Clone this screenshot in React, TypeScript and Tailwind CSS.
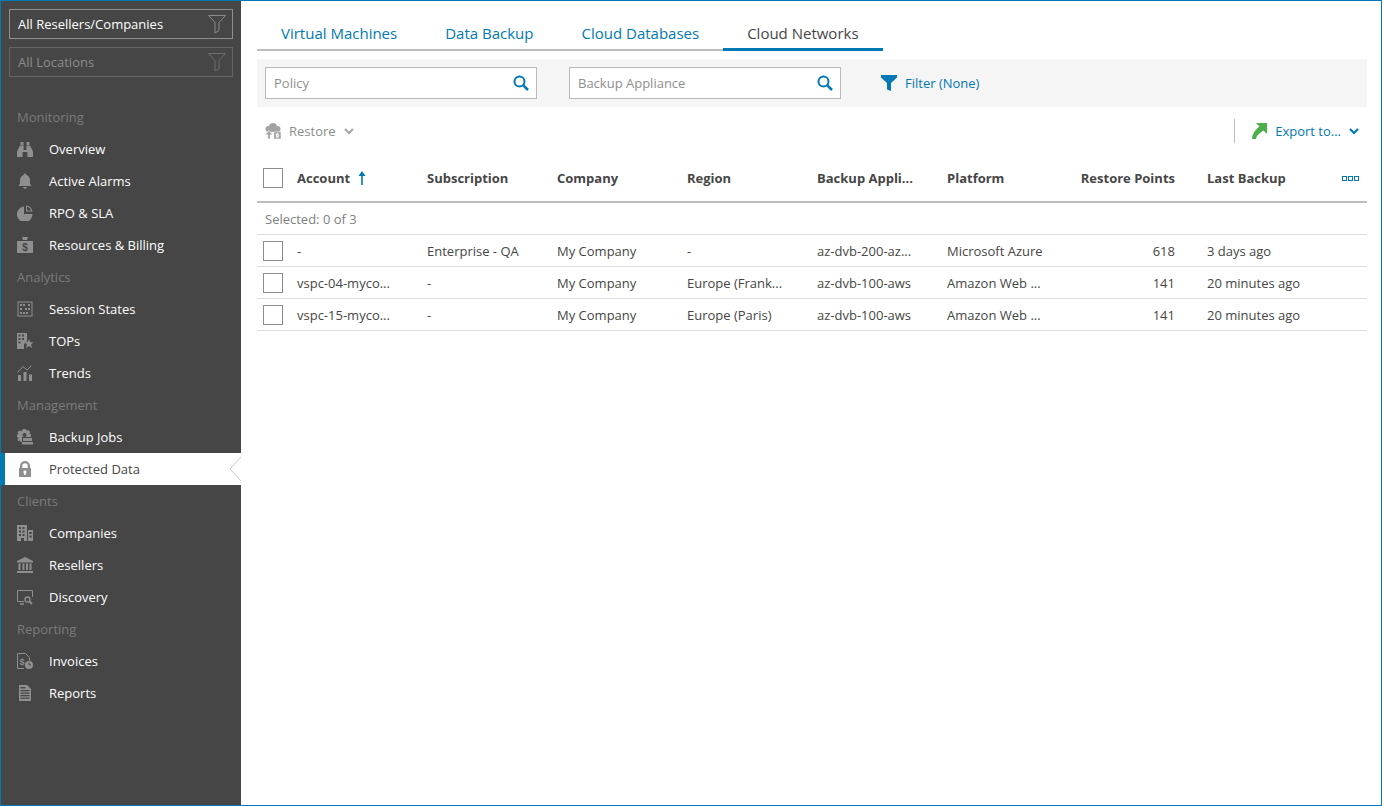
import { ReactNode } from "react";

const gray = "#8f8f8f";

const icons: Record<string, ReactNode> = {
  binoculars: (
    <svg viewBox="0 0 16 16" className="w-4 h-4" fill={gray}>
      <path d="M3.500 1h3v3h-3zM9.500 1h3v3h-3zM3 4.500h3.600V9h2.800V4.500H13l3 6V16h-5.600v-5H5.600v5H0v-5.500z" />
    </svg>
  ),
  bell: (
    <svg viewBox="0 0 16 16" className="w-4 h-4" fill={gray}>
      <path d="M8 0.500a1.300 1.300 0 0 1 1.300 1.500C11.600 2.700 13 4.800 13 7.500v3l1.500 2.500H1.500L3 10.500v-3C3 4.800 4.400 2.700 6.700 2A1.300 1.300 0 0 1 8 .5zM6.200 14h3.600a1.800 1.800 0 0 1-3.600 0z" />
    </svg>
  ),
  pie: (
    <svg viewBox="0 0 16 16" className="w-4 h-4" fill={gray}>
      <path d="M7 1.500V9h8.500A7.800 7.800 0 1 1 7 1.500z" />
      <path d="M9 .5v6h6.500A6.500 6.500 0 0 0 9 .5zm1 1.200a5.300 5.300 0 0 1 4.200 3.800H10z" />
    </svg>
  ),
  money: (
    <svg viewBox="0 0 16 16" className="w-4 h-4" fill={gray}>
      <path d="M5 0h6l-1 3H6zM0 4h16v12H0z" />
      <text x="8" y="14" fontSize="10" textAnchor="middle" fill="#464646" fontFamily="Liberation Sans" fontWeight="700">$</text>
    </svg>
  ),
  grid: (
    <svg viewBox="0 0 16 16" className="w-4 h-4" fill={gray}>
      <path fillRule="evenodd" d="M.5.5h15v15H.5zM1.500 1.500v13h13v-13z" />
      <path d="M3 3h2v2H3zM6 3h2v2H6zM11 3h2v2h-2zM3 7h2v2H3zM8 7h2v2H8zM11 7h2v2h-2zM3 11h2v2H3zM6 11h2v2H6zM9 11h2v2H9z" />
    </svg>
  ),
  tops: (
    <svg viewBox="0 0 16 16" className="w-4 h-4" fill={gray}>
      <path fillRule="evenodd" d="M0 0h10v8.500L7 11v5H0zM1.500 1.500v2h2v-2zM5 1.500v2h2v-2zM1.500 5v2h2V5zM5 5v2h2V5zM1.500 8.500v2h2v-2z" />
      <path d="M12 6l1.300 3.200h3.200l-2.500 2.200 1 3.600-3-2-3 2 1-3.600-2.500-2.200h3.200z" />
    </svg>
  ),
  trends: (
    <svg viewBox="0 0 16 16" className="w-4 h-4" fill={gray}>
      <path d="M1 10h3v6H1zM6.500 7h3v9h-3zM12 9.500h3V16h-3z" />
      <path d="M.5 7.500L6 1.500l4 3.500L14.500.5" fill="none" stroke={gray} strokeWidth="1" />
    </svg>
  ),
  gear: (
    <svg viewBox="0 0 16 16" className="w-4 h-4" fill={gray}>
      <path d="M6 0h3l.4 1.800 1.800-.9 2 2-.9 1.800 1.700.4v2.900H5v5H3.500l-.6-1.500-1.800.7-.6-2.200 1-1.300L0 8V5.500l1.500-.4L.6 3l2-1.600 1.900.8z" />
      <circle cx="7.500" cy="6" r="2" fill="#464646" />
      <path d="M6 9h9v3H6zM5 13h11v2.500H5z" />
    </svg>
  ),
  lock: (
    <svg viewBox="0 0 16 16" className="w-4 h-4" fill={gray}>
      <path fillRule="evenodd" d="M8 0a5 5 0 0 1 5 5v2h1v9H2V7h1V5a5 5 0 0 1 5-5zM5.300 7h5.400V5a2.700 2.700 0 0 0-5.400 0zM8 9.500a1.500 1.500 0 0 0-.8 2.800V14h1.600v-1.700A1.500 1.500 0 0 0 8 9.500z" />
    </svg>
  ),
  companies: (
    <svg viewBox="0 0 16 16" className="w-4 h-4" fill={gray}>
      <path fillRule="evenodd" d="M0 0h10v16H7v-3H4v3H0zM2 2v2h2V2zM5.500 2v2h2V2zM2 5.500v2h2v-2zM5.500 5.500v2h2v-2zM2 9v2h2V9zM5.500 9v2h2V9z" />
      <path fillRule="evenodd" d="M11 5h5v11h-5zM12.300 7v2h2.400V7zM12.300 10.500v2h2.400v-2z" />
    </svg>
  ),
  bank: (
    <svg viewBox="0 0 16 16" className="w-4 h-4" fill={gray}>
      <path d="M8 0l8 4v1.500H0V4zM1.500 6.500h2v6.500h-2zM5.500 6.500h2v6.500h-2zM9 6.500h2v6.500H9zM12.500 6.500h2v6.500h-2zM0 14h16v2H0z" />
    </svg>
  ),
  discovery: (
    <svg viewBox="0 0 16 16" className="w-4 h-4" fill="none" stroke={gray}>
      <path d="M7 12.500H.5V1.500h15V8" />
      <path d="M3 15h4" strokeWidth="1.500" />
      <circle cx="10.500" cy="10.500" r="2.500" strokeWidth="1.300" />
      <path d="M12.500 12.500L15 15" strokeWidth="1.800" />
    </svg>
  ),
  invoices: (
    <svg viewBox="0 0 16 16" className="w-4 h-4" fill={gray}>
      <path fill="none" stroke={gray} d="M7 15.500H.5V.5h8l4 4v3" />
      <text x="5" y="11.500" fontSize="9" textAnchor="middle" fontFamily="Liberation Sans" fontWeight="700">$</text>
      <circle cx="12" cy="12" r="4" />
      <path d="M12 9.500V12h2" stroke="#464646" fill="none" />
    </svg>
  ),
  reports: (
    <svg viewBox="0 0 16 16" className="w-4 h-4" fill={gray}>
      <path fillRule="evenodd" d="M2 0h8l4 4v12H2zM3.500 5v1.200h9V5zM3.500 7.500v1.200h9V7.500zM3.500 10v1.200h9V10zM3.500 12.500v1.200h9v-1.200zM3.500 2v1.500h5V2z" />
    </svg>
  ),
};

const nav: { title: string; items: [string, string][] }[] = [
  {
    title: "Monitoring",
    items: [
      ["Overview", "binoculars"],
      ["Active Alarms", "bell"],
      ["RPO & SLA", "pie"],
      ["Resources & Billing", "money"],
    ],
  },
  {
    title: "Analytics",
    items: [
      ["Session States", "grid"],
      ["TOPs", "tops"],
      ["Trends", "trends"],
    ],
  },
  {
    title: "Management",
    items: [
      ["Backup Jobs", "gear"],
      ["Protected Data", "lock"],
    ],
  },
  {
    title: "Clients",
    items: [
      ["Companies", "companies"],
      ["Resellers", "bank"],
      ["Discovery", "discovery"],
    ],
  },
  {
    title: "Reporting",
    items: [
      ["Invoices", "invoices"],
      ["Reports", "reports"],
    ],
  },
];

const columns = ["Subscription", "Company", "Region", "Backup Appli...", "Platform"];

const rows = [
  ["-", "Enterprise - QA", "My Company", "-", "az-dvb-200-az...", "Microsoft Azure", "618", "3 days ago"],
  ["vspc-04-myco...", "-", "My Company", "Europe (Frank...", "az-dvb-100-aws", "Amazon Web ...", "141", "20 minutes ago"],
  ["vspc-15-myco...", "-", "My Company", "Europe (Paris)", "az-dvb-100-aws", "Amazon Web ...", "141", "20 minutes ago"],
];

const gridCols = "grid grid-cols-[40px_130px_130px_130px_130px_130px_130px_130px_130px_1fr] items-center";

const FunnelOutline = ({ dim }: { dim?: boolean }) => (
  <svg viewBox="0 0 20 20" className="w-5 h-5" fill="none" stroke={dim ? "#6e6e6e" : "#8a8a8a"}>
    <path d="M1.500 1.500h17l-6.500 7v8l-4 2.500V8.500z" />
  </svg>
);

const ScopeBox = ({ label, dim }: { label: string; dim?: boolean }) => (
  <div
    className={`flex items-center justify-between h-[30px] pl-2 pr-[5px] border ${
      dim ? "border-[#646464] text-[#8c8c8c]" : "border-[#8f8f8f] text-white"
    }`}
  >
    <span className="pt-[2px]">{label}</span>
    <FunnelOutline dim={dim} />
  </div>
);

const Sidebar = () => (
  <aside className="w-[240px] shrink-0 bg-[#464646] flex flex-col">
    <div className="flex flex-col gap-2 pt-2 pl-2 pr-2 h-[100px]">
      <ScopeBox label="All Resellers/Companies" />
      <ScopeBox label="All Locations" dim />
    </div>
    {nav.map((group) => (
      <div key={group.title}>
        <div className="h-8 flex items-center pl-4 pt-[2px] text-[#7b7b7b]">{group.title}</div>
        {group.items.map(([label, icon]) => {
          const active = label === "Protected Data";
          return (
            <div
              key={label}
              className={`relative h-8 flex items-center ${
                active ? "bg-white text-[#464646] border-l-4 border-[#0079b4] pl-3" : "text-white pl-4"
              }`}
            >
              <span className="w-8 shrink-0 flex">{icons[icon]}</span>
              <span className="pt-[2px]">{label}</span>
              {active && (
                <svg viewBox="0 0 12 24" className="absolute right-0 top-1 w-3 h-6" fill="#ffffff" stroke="#c8c8c8">
                  <path d="M12 0L1 12l11 12" />
                </svg>
              )}
            </div>
          );
        })}
      </div>
    ))}
  </aside>
);

const SearchBox = ({ placeholder }: { placeholder: string }) => (
  <div className="w-[272px] h-8 bg-white border border-[#b9b9b9] flex items-center justify-between pl-2 pr-[7px]">
    <span className="pt-[2px] text-[#8f8f8f]">{placeholder}</span>
    <svg viewBox="0 0 16 16" className="w-4 h-4" fill="none" stroke="#0079b4">
      <circle cx="6.500" cy="6.500" r="5" strokeWidth="2" />
      <path d="M10.300 10.300L15 15" strokeWidth="2.600" />
    </svg>
  </div>
);

const Chevron = ({ color }: { color: string }) => (
  <svg viewBox="0 0 10 7" className="w-[10px] h-[7px]" fill="none" stroke={color} strokeWidth="2.200">
    <path d="M1 1l4 4 4-4" />
  </svg>
);

const Checkbox = () => <div className="w-5 h-5 border border-[#8c8c8c] bg-white" />;

const tabs = ["Virtual Machines", "Data Backup", "Cloud Databases"];

export default function App() {
  return (
    <div
      className="w-[1382px] h-[806px] flex border border-[#0079b4] bg-white overflow-hidden text-[13px] text-[#464646]"
      style={{ fontFamily: '"Open Sans", sans-serif' }}
    >
      <Sidebar />
      <main className="flex-1 pl-4 pr-[14px] pt-2 min-w-0">
        {/* Tabs */}
        <div className="flex h-[42px] text-[15px]">
          {tabs.map((tab) => (
            <div key={tab} className="px-6 pt-[13px] border-b-2 border-[#bdbdbd] h-[42px] text-[#0079b4] whitespace-nowrap">
              {tab}
            </div>
          ))}
          <div className="px-6 pt-[13px] border-b-[3px] border-[#0079b4] h-[42px] whitespace-nowrap text-[#464646]">
            Cloud Networks
          </div>
        </div>

        {/* Filters */}
        <div className="mt-2 h-12 bg-[#f5f5f5] flex items-center pl-2">
          <SearchBox placeholder="Policy" />
          <div className="ml-8">
            <SearchBox placeholder="Backup Appliance" />
          </div>
          <svg viewBox="0 0 16 16" className="ml-10 w-4 h-4" fill="#0079b4">
            <path d="M0 0h16v2.500L10 8v8l-4-1.500V8L0 2.500z" />
          </svg>
          <span className="ml-2 pt-[2px] text-[#0079b4]">Filter (None)</span>
        </div>

        {/* Toolbar */}
        <div className="h-12 flex items-center justify-between pl-2">
          <div className="flex items-center text-[#8c8c8c]">
            <svg viewBox="0 0 16 16" className="w-4 h-4" fill="#a3a3a3">
              <circle cx="3.500" cy="6" r="3" />
              <circle cx="8" cy="4" r="4" />
              <circle cx="12.500" cy="6" r="3" />
              <path d="M3.500 6h9v3h-9z" />
              <path d="M4 7.500l4 4.300H5.300V16H2.700v-4.200H0z" stroke="#ffffff" strokeWidth=".7" />
              <path fillRule="evenodd" stroke="#ffffff" strokeWidth=".5" d="M8.800 8.800h7.200V16H8.800zM12.400 10.200a1.300 2.300 0 1 0 .01 0zM12.400 11.200a.5 1.300 0 1 1-.01 0z" />
            </svg>
            <span className="ml-2 pt-[2px]">Restore</span>
            <span className="ml-2">
              <Chevron color="#a8a8a8" />
            </span>
          </div>
          <div className="flex items-center">
            <div className="w-px h-6 bg-[#bdbdbd]" />
            <svg viewBox="0 0 16 16" className="ml-4 w-4 h-4" fill="#4bb049">
              <path d="M5 0h11v11l-3.500-3.500C10 9.500 6 11 5 16H1C1.500 9 6 5.500 8.500 3.500z" />
            </svg>
            <span className="ml-2 pt-[2px] text-[#0079b4]">Export to...</span>
            <span className="ml-2 mr-2">
              <Chevron color="#0079b4" />
            </span>
          </div>
        </div>

        {/* Table header */}
        <div className={`${gridCols} h-[48px] border-b-2 border-[#bdbdbd] font-bold`}>
          <div className="pl-[6px]">
            <Checkbox />
          </div>
          <div className="flex items-center whitespace-nowrap">
            <span className="pt-[2px]">Account</span>
            <svg viewBox="0 0 8 14" className="ml-2 w-2 h-[14px]" fill="#0079b4">
              <path d="M4 0l3.500 5H4.800v9H3.200V5H.5z" />
            </svg>
          </div>
          {columns.map((c) => (
            <div key={c} className="pt-[2px] whitespace-nowrap">{c}</div>
          ))}
          <div className="pt-[2px] text-right pr-8 whitespace-nowrap">Restore Points</div>
          <div className="pt-[2px] whitespace-nowrap">Last Backup</div>
          <div className="flex justify-end gap-px pr-2">
            <span className="w-[5px] h-[5px] border border-[#0079b4]" />
            <span className="w-[5px] h-[5px] border border-[#0079b4]" />
            <span className="w-[5px] h-[5px] border border-[#0079b4]" />
          </div>
        </div>

        {/* Table body */}
        <div className="h-8 flex items-center pl-2 pt-[2px] border-b border-[#dcdcdc] text-[#808080]">Selected: 0 of 3</div>
        {rows.map((r, i) => (
          <div key={i} className={`${gridCols} h-8 border-b border-[#dcdcdc]`}>
            <div className="pl-[6px]">
              <Checkbox />
            </div>
            {r.map((cell, j) => (
              <div key={j} className={`pt-[2px] whitespace-nowrap ${j === 6 ? "text-right pr-8" : ""}`}>
                {cell}
              </div>
            ))}
          </div>
        ))}
      </main>
    </div>
  );
}
